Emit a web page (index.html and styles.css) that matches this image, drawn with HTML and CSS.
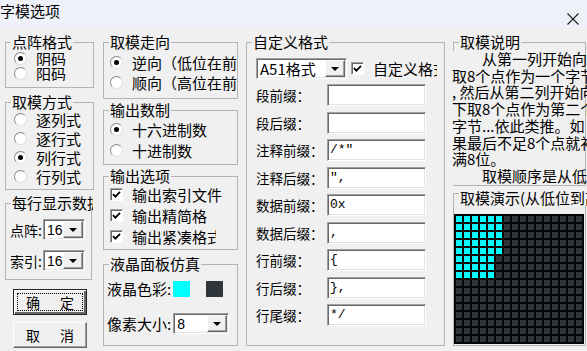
FILE: index.html
```html
<!DOCTYPE html>
<html lang="zh-CN">
<head>
    <meta charset="UTF-8">
    <meta name="viewport" content="width=device-width, initial-scale=1.0">
    <title>字模选项</title>
    <link rel="stylesheet" href="styles.css">
</head>
<body>
    <div class="titlebar">
        <span class="title">字模选项</span>
        <svg class="close" width="12" height="12" viewBox="0 0 12 12">
            <path d="M0.5 0.5L11.5 11.5M11.5 0.5L0.5 11.5" stroke="#1b1b1b" stroke-width="1.1" fill="none"/>
        </svg>
    </div>

    <div class="dialog">
        <!-- 第一列 -->
        <div class="col col-1">
            <fieldset class="group g-format">
                <legend>点阵格式</legend>
                <div class="opt"><span class="radio on"></span>阴码</div>
                <div class="opt"><span class="radio"></span>阳码</div>
            </fieldset>
            <fieldset class="group g-mode">
                <legend>取模方式</legend>
                <div class="opt"><span class="radio"></span>逐列式</div>
                <div class="opt"><span class="radio"></span>逐行式</div>
                <div class="opt"><span class="radio on"></span>列行式</div>
                <div class="opt"><span class="radio"></span>行列式</div>
            </fieldset>
            <fieldset class="group g-perline">
                <legend>每行显示数据</legend>
                <div class="field">
                    <span class="field-label">点阵:</span>
                    <div class="combo combo-num"><span class="combo-value">16</span><span class="combo-btn"><i class="arrow"></i></span></div>
                </div>
                <div class="field">
                    <span class="field-label">索引:</span>
                    <div class="combo combo-num"><span class="combo-value">16</span><span class="combo-btn"><i class="arrow"></i></span></div>
                </div>
            </fieldset>
            <button class="btn btn-default"><span class="btn-face"><span>确</span><span>定</span></span></button>
            <button class="btn btn-cancel"><span class="btn-face"><span>取</span><span>消</span></span></button>
        </div>

        <!-- 第二列 -->
        <div class="col col-2">
            <fieldset class="group g-dir">
                <legend>取模走向</legend>
                <div class="opt"><span class="radio on"></span>逆向（低位在前）</div>
                <div class="opt"><span class="radio"></span>顺向（高位在前）</div>
            </fieldset>
            <fieldset class="group g-radix">
                <legend>输出数制</legend>
                <div class="opt"><span class="radio on"></span>十六进制数</div>
                <div class="opt"><span class="radio"></span>十进制数</div>
            </fieldset>
            <fieldset class="group g-output">
                <legend>输出选项</legend>
                <div class="opt"><span class="check"><svg width="9" height="9" viewBox="0 0 9 9"><path d="M1 4.2L3.4 6.6L8 1.8" stroke="#000" stroke-width="1.8" fill="none"/></svg></span>输出索引文件</div>
                <div class="opt"><span class="check"><svg width="9" height="9" viewBox="0 0 9 9"><path d="M1 4.2L3.4 6.6L8 1.8" stroke="#000" stroke-width="1.8" fill="none"/></svg></span>输出精简格</div>
                <div class="opt opt-narrow"><span class="check"><svg width="9" height="9" viewBox="0 0 9 9"><path d="M1 4.2L3.4 6.6L8 1.8" stroke="#000" stroke-width="1.8" fill="none"/></svg></span>输出紧凑格式</div>
            </fieldset>
            <fieldset class="group g-lcd">
                <legend>液晶面板仿真</legend>
                <div class="lcd-row">
                    <span>液晶色彩:</span>
                    <span class="swatch swatch-on"></span>
                    <span class="swatch swatch-off"></span>
                </div>
                <div class="lcd-row lcd-size">
                    <span>像素大小:</span>
                    <div class="combo combo-px"><span class="combo-value">8</span><span class="combo-btn"><i class="arrow"></i></span></div>
                </div>
            </fieldset>
        </div>

        <!-- 第三列 -->
        <div class="col col-3">
            <fieldset class="group g-custom">
                <legend>自定义格式</legend>
                <div class="fmt-head">
                    <div class="combo combo-fmt"><span class="combo-value">A51格式</span><span class="combo-btn"><i class="arrow"></i></span></div>
                    <span class="check"><svg width="9" height="9" viewBox="0 0 9 9"><path d="M1 4.2L3.4 6.6L8 1.8" stroke="#000" stroke-width="1.8" fill="none"/></svg></span>
                    <span class="fmt-check-label">自定义格式</span>
                </div>
                <div class="fmt-rows">
                    <div class="fmt-row"><span class="fmt-label">段前缀：</span><div class="edit"></div></div>
                    <div class="fmt-row"><span class="fmt-label">段后缀：</span><div class="edit"></div></div>
                    <div class="fmt-row"><span class="fmt-label">注释前缀：</span><div class="edit">/*"</div></div>
                    <div class="fmt-row"><span class="fmt-label">注释后缀：</span><div class="edit">",</div></div>
                    <div class="fmt-row"><span class="fmt-label">数据前缀：</span><div class="edit">0x</div></div>
                    <div class="fmt-row"><span class="fmt-label">数据后缀：</span><div class="edit">,</div></div>
                    <div class="fmt-row"><span class="fmt-label">行前缀：</span><div class="edit">{</div></div>
                    <div class="fmt-row"><span class="fmt-label">行后缀：</span><div class="edit">},</div></div>
                    <div class="fmt-row"><span class="fmt-label">行尾缀：</span><div class="edit">*/</div></div>
                </div>
            </fieldset>
        </div>

        <!-- 第四列 -->
        <div class="col col-4">
            <fieldset class="group g-note">
                <legend>取模说明</legend>
                <p class="note">　　从第一列开始向下<br>取8个点作为一个字节<br>, 然后从第二列开始向<br>下取8个点作为第二个<br>字节...依此类推。如<br>果最后不足8个点就补<br>满8位。<br>　　取模顺序是从低到高</p>
            </fieldset>
            <fieldset class="group g-demo">
                <legend>取模演示(从低位到高位)</legend>
                <div class="lcd-grid" id="lcdGrid"></div>
            </fieldset>
        </div>
    </div>

    <script>
        // 生成取模演示点阵 16x16
        const grid = document.getElementById("lcdGrid");
        for (let row = 0; row < 16; row++) {
            for (let col = 0; col < 16; col++) {
                const cell = document.createElement("span");
                cell.className = "pixel";
                // 前5行亮6个点, 第6-8行亮5个点
                if ((row < 5 && col < 6) || (row >= 5 && row < 8 && col < 5)) {
                    cell.classList.add("lit");
                }
                grid.appendChild(cell);
            }
        }
    </script>
</body>
</html>
```

FILE: styles.css
```css
* {
    box-sizing: border-box;
}
html, body {
    margin: 0;
    height: 100%;
}
body {
    background: #f0f0f0;
    font-family: "Noto Sans CJK SC", "Noto Sans", sans-serif;
    font-size: 15px;
    color: #000;
    overflow: hidden;
}

/* 标题栏 */
.titlebar {
    display: flex;
    height: 27px;
    background: #eef2f8;
}
.title {
    margin-top: 3px;
    line-height: 16px;
}
.close {
    margin: 13px 8px 0 auto;
}

.dialog {
    display: flex;
    align-items: flex-start;
    width: 720px;
    padding: 7px 0 0 5px;
}
.col {
    display: flex;
    flex-direction: column;
    flex: none;
}
.col-1 { width: 89px; }
.col-2 { width: 135px; margin-left: 9px; }
.col-3 { width: 199px; margin-left: 8px; }
.col-4 { width: 133px; margin-left: 8px; }

/* 分组框 */
.group {
    margin: 0;
    padding: 0;
    border: 1px solid #b4b4b4;
    min-width: 0;
}
.group legend {
    margin-left: 5px;
    padding: 0 1px;
    line-height: 16px;
    white-space: nowrap;
}

/* 单选 / 复选 */
.opt {
    display: flex;
    align-items: center;
    line-height: 15px;
    white-space: nowrap;
    overflow: hidden;
}
.radio {
    flex: none;
    position: relative;
    width: 13px;
    height: 13px;
    margin-right: 9px;
    border-radius: 50%;
    background: #fff;
    border: 1px solid;
    border-color: #8a8a8a #dedede #dedede #8a8a8a;
}
.radio.on::after {
    content: "";
    position: absolute;
    left: 3px;
    top: 3px;
    width: 5px;
    height: 5px;
    border-radius: 50%;
    background: #000;
}
.check {
    flex: none;
    display: flex;
    align-items: center;
    justify-content: center;
    width: 13px;
    height: 13px;
    margin-right: 9px;
    background: #fff;
    border: 1px solid;
    border-color: #a0a0a0 #fff #fff #a0a0a0;
    box-shadow: inset 1px 1px 0 #696969;
}

.g-format { height: 54px; padding-top: 1px; }
.g-format .opt { height: 15px; padding-left: 8px; }
.g-mode { height: 96px; margin-top: 6px; }
.g-mode .opt { height: 19px; padding-left: 8px; }

.g-perline {
    width: 87px;
    height: 85px;
    margin-top: 5px;
    padding-top: 8px;
}
.g-perline legend {
    max-width: 82px;
    overflow: hidden;
}
.field {
    display: flex;
    align-items: center;
    height: 21px;
    padding-left: 4px;
}
.field + .field {
    margin-top: 10px;
}
.field-label {
    font-size: 14px;
    width: 33px;
}

/* 下拉框 */
.combo {
    display: flex;
    align-items: stretch;
    height: 21px;
    background: #fff;
    border: 1px solid;
    border-color: #a0a0a0 #fff #fff #a0a0a0;
    box-shadow: inset 1px 1px 0 #696969, inset -1px -1px 0 #e3e3e3;
    padding: 1px;
}
.combo-value {
    flex: 1;
    padding-left: 2px;
    line-height: 18px;
    white-space: nowrap;
    overflow: hidden;
}
.combo-btn {
    flex: none;
    display: flex;
    align-items: center;
    justify-content: center;
    width: 20px;
    background: #f0f0f0;
    border: 1px solid;
    border-color: #fff #696969 #696969 #fff;
    box-shadow: inset -1px -1px 0 #a0a0a0;
}
.arrow {
    width: 0;
    height: 0;
    border-left: 4px solid transparent;
    border-right: 4px solid transparent;
    border-top: 4px solid #000;
}
.combo-num {
    width: 42px;
}
.combo-num .combo-value {
    font-family: "Liberation Sans", sans-serif;
    font-size: 14px;
}
.combo-px {
    width: 56px;
    margin-left: 2px;
}
.combo-px .combo-value {
    font-family: "Liberation Sans", sans-serif;
    font-size: 14px;
}
.combo-fmt {
    width: 91px;
}

/* 按钮 */
.btn {
    display: block;
    width: 74px;
    height: 26px;
    margin-left: 8px;
    padding: 3px;
    font-family: inherit;
    font-size: 14px;
    line-height: 16px;
    background: #f0f0f0;
    border: 1px solid;
    border-color: #fff #696969 #696969 #fff;
    box-shadow: inset -1px -1px 0 #a0a0a0;
}
.btn-default {
    margin-top: 9px;
    border-color: #222;
    box-shadow: inset 1px 1px 0 #fff, inset -2px -2px 0 #696969;
}
.btn-cancel {
    margin-top: 7px;
}
.btn-face {
    display: flex;
    justify-content: space-between;
    align-items: center;
    height: 100%;
    padding: 0 8px;
    border: 1px dotted transparent;
}
.btn-default .btn-face {
    border-color: #000;
}

/* 第二列 */
.g-dir { height: 65px; padding-top: 2px; }
.g-dir .opt { height: 20px; padding-left: 6px; }
.g-radix { height: 63px; margin-top: 3px; padding-top: 1px; }
.g-radix .opt { height: 21px; padding-left: 6px; }
.g-output { height: 82px; margin-top: 3px; }
.g-output .opt { height: 21px; padding-left: 6px; }
.g-output .opt-narrow { width: 112px; }
.g-lcd { height: 90px; margin-top: 6px; padding-top: 9px; }
.lcd-row {
    display: flex;
    align-items: center;
    height: 16px;
    padding-left: 3px;
    line-height: 16px;
    white-space: nowrap;
}
.lcd-size {
    height: 21px;
    margin-top: 16px;
}
.swatch {
    width: 17px;
    height: 16px;
    margin-left: 2px;
}
.swatch-on { background: #00ffff; }
.swatch-off { background: #2e353b; margin-left: 16px; }

/* 第三列 */
.g-custom { height: 312px; padding-top: 8px; }
.fmt-head {
    display: flex;
    align-items: center;
    height: 21px;
    padding-left: 9px;
}
.fmt-head .check {
    margin-left: 4px;
}
.fmt-check-label {
    width: 64px;
    line-height: 16px;
    white-space: nowrap;
    overflow: hidden;
}
.fmt-rows {
    display: flex;
    flex-direction: column;
    gap: 5.5px;
    margin-top: 5px;
    padding-left: 9px;
}
.fmt-row {
    display: flex;
    align-items: center;
    height: 22px;
}
.fmt-label {
    width: 71px;
    font-size: 13.5px;
    white-space: nowrap;
}
.edit {
    width: 99px;
    height: 22px;
    padding-left: 2px;
    background: #fff;
    border: 1px solid;
    border-color: #a0a0a0 #fff #fff #a0a0a0;
    box-shadow: inset 1px 1px 0 #696969, inset -1px -1px 0 #e3e3e3;
    font-family: "Liberation Mono", monospace;
    font-size: 13px;
    line-height: 20px;
    white-space: pre;
}

/* 第四列 */
.g-note { height: 152px; padding-top: 1px; }
.note {
    margin: 0 0 0 -2px;
    background: #f0f0f0;
    line-height: 16.7px;
    white-space: nowrap;
}
.g-demo {
    height: 166px;
    margin-top: -6px;
}
.g-demo legend {
    padding-top: 10px;
}
.lcd-grid {
    display: grid;
    grid-template-columns: repeat(16, 6px);
    grid-auto-rows: 6px;
    gap: 2px;
    width: 130px;
    margin-top: 8px;
    padding: 2px;
    background: #050505;
}
.pixel {
    background: #2e353b;
}
.pixel.lit {
    background: #00ffff;
}
```
